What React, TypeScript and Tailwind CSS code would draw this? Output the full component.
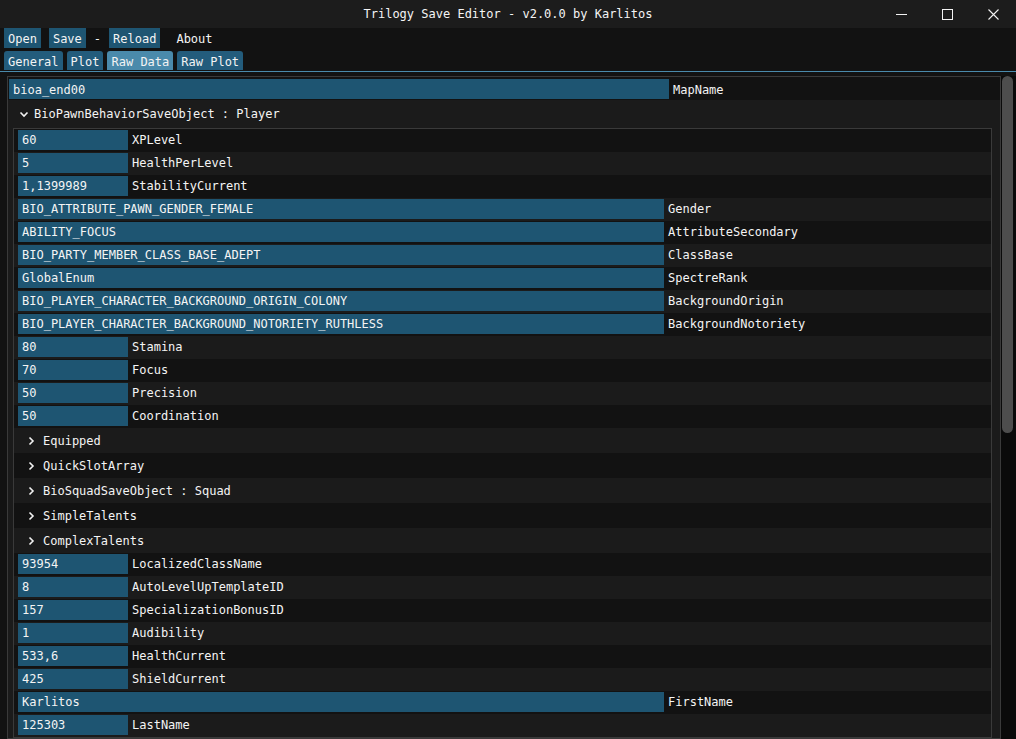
import React from 'react';

type Field = { value: string; label: string; wide?: boolean };
type Node = { kind: 'field'; field: Field } | { kind: 'group'; label: string };

const f = (value: string, label: string, wide = false): Node => ({ kind: 'field', field: { value, label, wide } });
const g = (label: string): Node => ({ kind: 'group', label });

const playerRows: Node[] = [
  f('60', 'XPLevel'),
  f('5', 'HealthPerLevel'),
  f('1,1399989', 'StabilityCurrent'),
  f('BIO_ATTRIBUTE_PAWN_GENDER_FEMALE', 'Gender', true),
  f('ABILITY_FOCUS', 'AttributeSecondary', true),
  f('BIO_PARTY_MEMBER_CLASS_BASE_ADEPT', 'ClassBase', true),
  f('GlobalEnum', 'SpectreRank', true),
  f('BIO_PLAYER_CHARACTER_BACKGROUND_ORIGIN_COLONY', 'BackgroundOrigin', true),
  f('BIO_PLAYER_CHARACTER_BACKGROUND_NOTORIETY_RUTHLESS', 'BackgroundNotoriety', true),
  f('80', 'Stamina'),
  f('70', 'Focus'),
  f('50', 'Precision'),
  f('50', 'Coordination'),
  g('Equipped'),
  g('QuickSlotArray'),
  g('BioSquadSaveObject : Squad'),
  g('SimpleTalents'),
  g('ComplexTalents'),
  f('93954', 'LocalizedClassName'),
  f('8', 'AutoLevelUpTemplateID'),
  f('157', 'SpecializationBonusID'),
  f('1', 'Audibility'),
  f('533,6', 'HealthCurrent'),
  f('425', 'ShieldCurrent'),
  f('Karlitos', 'FirstName', true),
  f('125303', 'LastName'),
];

const Chevron = ({ open }: { open?: boolean }) => (
  <svg width="10" height="10" viewBox="0 0 10 10" className="shrink-0">
    {open ? (
      <path d="M1.5 3.5 L5 7 L8.5 3.5" fill="none" stroke="#f2f2f2" strokeWidth="1.6" />
    ) : (
      <path d="M3.5 1.5 L7 5 L3.5 8.5" fill="none" stroke="#f2f2f2" strokeWidth="1.6" />
    )}
  </svg>
);

const FieldRow = ({ field, dark }: { field: Field; dark: boolean }) => (
  <div className={`flex h-[23px] items-start pt-[1px] px-[4px] ${dark ? 'bg-[#121212]' : 'bg-[#1b1b1b]'}`}>
    <div className={`flex h-[20px] items-center bg-[#1e5572] px-[4px] ${field.wide ? 'w-2/3' : 'w-[110px]'}`}>
      {field.value}
    </div>
    <span className="pl-[4px] h-[20px] flex items-center">{field.label}</span>
  </div>
);

const GroupRow = ({ label, dark }: { label: string; dark: boolean }) => (
  <div className={`flex h-[25px] items-center gap-[7px] pl-[12px] ${dark ? 'bg-[#121212]' : 'bg-[#1b1b1b]'}`}>
    <Chevron />
    <span>{label}</span>
  </div>
);

const App: React.FC = () => {
  const menu = ['Open', 'Save'];
  const tabs = ['General', 'Plot', 'Raw Data', 'Raw Plot'];

  return (
    <div
      className="w-[1016px] h-[739px] overflow-hidden bg-[#121212] text-[12px] leading-none text-[#f4f4f4] flex flex-col"
      style={{ fontFamily: '"DejaVu Sans Mono", "Liberation Mono", monospace' }}
    >
      {/* title bar */}
      <div className="relative h-[28px] shrink-0 bg-[#1c1c1c] flex items-center justify-center">
        <span className="text-[12px]">Trilogy Save Editor - v2.0.0 by Karlitos</span>
        <div className="absolute right-0 top-0 h-full flex items-center">
          <div className="w-[46px] h-full flex items-center justify-center">
            <svg width="11" height="11" viewBox="0 0 11 11"><path d="M0 5.5 H11" stroke="#f2f2f2" strokeWidth="1" /></svg>
          </div>
          <div className="w-[46px] h-full flex items-center justify-center">
            <svg width="11" height="11" viewBox="0 0 11 11"><rect x="0.5" y="0.5" width="10" height="10" fill="none" stroke="#f2f2f2" strokeWidth="1" /></svg>
          </div>
          <div className="w-[46px] h-full flex items-center justify-center">
            <svg width="11" height="11" viewBox="0 0 11 11"><path d="M0.5 0.5 L10.5 10.5 M10.5 0.5 L0.5 10.5" stroke="#f2f2f2" strokeWidth="1.1" /></svg>
          </div>
        </div>
      </div>

      {/* menu bar */}
      <div className="h-[20px] shrink-0 flex items-stretch gap-[8px] px-[4px]">
        {menu.map((m) => (
          <div key={m} className="bg-[#1e5572] px-[4px] pt-[1px] flex items-center">{m}</div>
        ))}
        <div className="flex items-center pt-[1px]">-</div>
        <div className="bg-[#1e5572] px-[4px] pt-[1px] flex items-center">Reload</div>
        <div className="ml-[4px] px-[4px] pt-[1px] flex items-center">About</div>
      </div>

      {/* tabs */}
      <div className="h-[24px] shrink-0 flex items-end gap-[4px] px-[4px] border-b border-[#4a8aab]">
        {tabs.map((t) => (
          <div
            key={t}
            className={`h-[19px] mb-[1px] px-[4px] pt-[2px] flex items-center rounded-t-[3px] ${t === 'Raw Data' ? 'bg-[#4a8aab]' : 'bg-[#235c7c]'}`}
          >
            {t}
          </div>
        ))}
      </div>

      {/* content */}
      <div className="flex-1 min-h-0 flex pt-[4px] pl-[7px]">
        <div className="w-[994px] border border-[#3a3a3a] overflow-hidden">
          <div className="flex h-[23px] items-start pt-[2px] bg-[#121212] px-[1px]">
            <div className="flex h-[20px] w-2/3 items-center pt-[1px] bg-[#1e5572] px-[4px]">bioa_end00</div>
            <span className="pl-[4px] pt-[1px] h-[20px] flex items-center">MapName</span>
          </div>
          <div className="bg-[#1b1b1b] pl-[5px] pr-[8px]">
            <div className="flex h-[28px] items-center gap-[5px] pl-[6px]">
              <Chevron open />
              <span>BioPawnBehaviorSaveObject : Player</span>
            </div>
            <div className="border border-[#3a3a3a]">
              {playerRows.map((n, i) =>
                n.kind === 'field' ? (
                  <FieldRow key={i} field={n.field} dark={i % 2 === 0} />
                ) : (
                  <GroupRow key={i} label={n.label} dark={i % 2 === 0} />
                )
              )}
            </div>
          </div>
        </div>
        <div className="w-[15px] bg-[#0a0a0a] pl-[1px]">
          <div className="w-[11px] h-[357px] rounded-full bg-[#4d4d4d]" />
        </div>
      </div>
    </div>
  );
};

export default App;
